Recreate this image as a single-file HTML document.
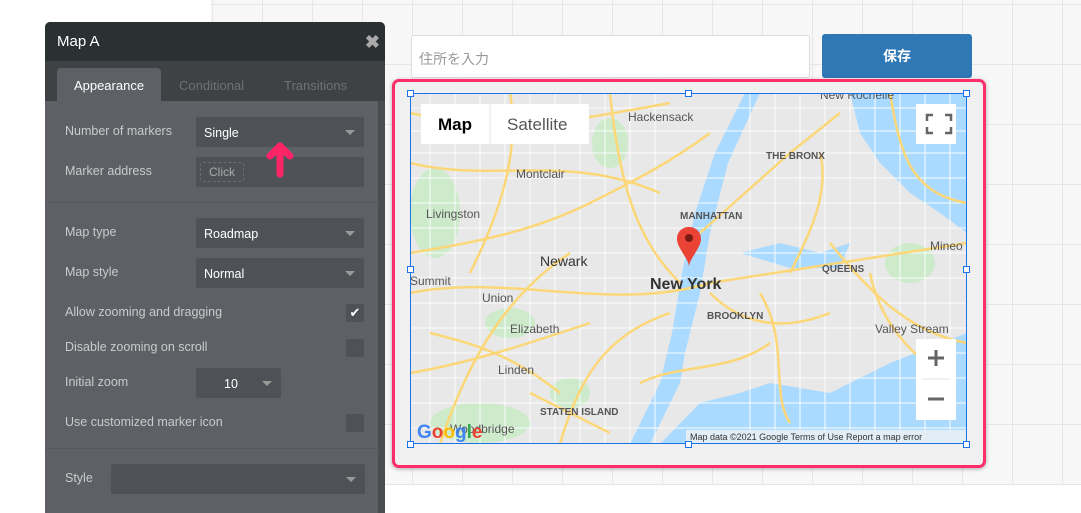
<!DOCTYPE html>
<html><head><meta charset="utf-8"><style>
*{margin:0;padding:0;box-sizing:border-box}
body{width:1081px;height:513px;overflow:hidden;position:relative;background:#fff;font-family:"Liberation Sans","Noto Sans CJK JP",sans-serif}
.grid{position:absolute;left:211px;top:0;width:870px;height:485px;background-color:#f7f7f7;
background-image:linear-gradient(90deg,#e6e6e6 1px,transparent 1px),linear-gradient(#e6e6e6 1px,transparent 1px);background-size:50px 50px,50px 60px;background-position:1px 0,0 4px}
.panel{position:absolute;left:45px;top:22px;width:340px;height:491px;background:#5d6165;border-radius:5px 5px 0 0;overflow:hidden}
.hd{height:39px;background:#2b3033;color:#fff;font-size:15px;padding:11px 12px}
.x{position:absolute;right:5px;top:10px;color:#aaa;font-size:18px;font-weight:bold}
.tabs{height:40px;background:#3e4245;position:relative}
.tab{position:absolute;top:7px;height:33px;font-size:13px;padding-top:10px;color:#6e7275}
.tab.a{left:12px;width:104px;background:#5d6165;color:#fff;border-radius:4px 4px 0 0;text-align:center}
.sb{position:absolute;right:0;top:79px;width:7px;bottom:0;background:#494d50}
.lbl{position:absolute;left:20px;color:#c9cbcc;font-size:12.5px}
.dd{position:absolute;background:#4e5256;border-radius:2px;color:#fff;font-size:12.5px;padding:9px 8px;height:30px}
.dd.ar:after{content:"";position:absolute;right:9px;top:13px;border:5px solid transparent;border-top:5px solid #999}
.cb{position:absolute;left:301px;width:18px;height:18px;background:#4e5256;border-radius:2px}
.hr{position:absolute;left:0;right:7px;height:1px;background:#55595d}
.map{position:absolute;left:392px;top:79px;width:594px;height:389px;border:3px solid #ff2d6a;border-radius:7px;background:#f0f0f0;box-shadow:0 1px 4px rgba(0,0,0,.3)}
.h{position:absolute;width:7px;height:7px;border:1px solid #1a73e8;background:#fff}
</style></head><body>
<div class="grid"></div>
<div class="panel">
<div class="hd">Map A</div><div class="x">✖</div>
<div class="tabs"><div class="tab a">Appearance</div><div class="tab" style="left:134px">Conditional</div><div class="tab" style="left:239px">Transitions</div></div>
<div class="sb"></div>
<div class="lbl" style="top:102px">Number of markers</div>
<div class="dd ar" style="left:151px;top:95px;width:168px">Single</div>
<div class="lbl" style="top:142px">Marker address</div>
<div class="dd" style="left:151px;top:135px;width:168px;padding:0"><span style="position:absolute;left:4px;top:5px;border:1px dashed #6a6e72;border-radius:3px;color:#aaa;padding:2px 8px;font-size:12px">Click</span></div>
<div class="hr" style="top:180px"></div>
<div class="lbl" style="top:203px">Map type</div>
<div class="dd ar" style="left:151px;top:196px;width:168px">Roadmap</div>
<div class="lbl" style="top:243px">Map style</div>
<div class="dd ar" style="left:151px;top:236px;width:168px">Normal</div>
<div class="lbl" style="top:283px">Allow zooming and dragging</div>
<div class="cb" style="top:282px;color:#fff;font-size:13px;text-align:center;line-height:18px">✔</div>
<div class="lbl" style="top:318px">Disable zooming on scroll</div>
<div class="cb" style="top:317px"></div>
<div class="lbl" style="top:353px">Initial zoom</div>
<div class="dd ar" style="left:151px;top:346px;width:85px;padding-left:28px">10</div>
<div class="lbl" style="top:393px">Use customized marker icon</div>
<div class="cb" style="top:392px"></div>
<div class="hr" style="top:426px"></div>
<div class="lbl" style="top:449px">Style</div>
<div class="dd ar" style="left:66px;top:442px;width:254px"></div>
</div>
<svg style="position:absolute;left:262px;top:138px" width="36" height="44" viewBox="0 0 36 44"><path d="M18 36V8M8 18L18 8L28 18" stroke="#ff2466" stroke-width="7" fill="none" stroke-linecap="round" stroke-linejoin="round"/></svg>
<div style="position:absolute;left:411px;top:35px;width:399px;height:43px;border:1px solid #ddd;border-radius:3px;background:#fff;color:#999;font-size:14px;padding:13px 7px">住所を入力</div>
<div style="position:absolute;left:822px;top:34px;width:150px;height:44px;background:#3077b5;border-radius:3px;color:#fff;font-size:14px;font-weight:bold;text-align:center;line-height:44px">保存</div>
<div class="map"></div>
<svg style="position:absolute;left:410px;top:93px" width="557" height="351" viewBox="0 0 557 351">
<rect width="557" height="351" fill="#e8e8e8"/>
<g fill="#cdeacb"><ellipse cx="25" cy="120" rx="25" ry="45"/><ellipse cx="100" cy="230" rx="25" ry="15"/><ellipse cx="70" cy="330" rx="50" ry="20"/><ellipse cx="200" cy="50" rx="18" ry="25"/><ellipse cx="500" cy="170" rx="25" ry="20"/><ellipse cx="160" cy="300" rx="20" ry="15"/></g>
<g fill="#aadaff">
<path d="M335 0L350 0L318 70L300 140L290 200L275 260L270 290L240 351L220 351L250 290L262 240L272 180L285 120L305 60Z"/>
<path d="M440 0L557 0L557 140L530 120L500 100L470 70L450 40Z"/>
<path d="M330 160L370 150L410 160L440 150L430 175L380 175Z"/>
<path d="M360 290L420 300L480 270L557 240L557 351L250 351L290 310L330 300Z"/>
</g>
<g stroke="#fff" stroke-width="1" fill="none" opacity=".95">
<path d="M0 15H557M0 38H557M0 60H557M0 85H557M0 110H557M0 135H557M0 160H557M0 185H557M0 210H557M0 235H557M0 260H557M0 285H557M0 310H557M0 335H557"/>
<path d="M20 0V351M45 0V351M70 0V351M95 0V351M120 0V351M145 0V351M170 0V351M195 0V351M220 0V351M245 0V351M340 0V351M365 0V351M390 0V351M415 0V351M440 0V351M465 0V351M490 0V351M515 0V351M540 0V351"/>
</g>
<g stroke="#fcd778" stroke-width="2.5" fill="none">
<path d="M0 20C100 40 150 30 260 10M0 70C80 90 160 60 250 100M0 200C100 180 200 220 300 190L557 150M30 351C60 260 100 200 160 160M200 0C210 100 230 150 270 190M150 351C170 280 200 240 260 220M350 200C380 250 360 300 380 330M420 150C460 200 500 240 557 250M290 140L380 60L430 20M480 0C490 60 500 100 557 110M0 280C60 270 120 250 180 230M230 290C270 270 320 280 360 250M100 0C110 60 90 120 60 180M0 160C60 150 120 140 180 110M180 110C220 90 260 70 300 40M300 200C330 230 370 240 420 220M410 60C420 100 400 140 380 180M20 240C60 250 100 260 150 300M460 180C470 230 500 260 540 290M120 300L200 340"/>
</g>
<g font-family="Liberation Sans,sans-serif" fill="#555" font-size="12">
<text x="218" y="28">Hackensack</text><text x="106" y="85">Montclair</text><text x="16" y="125">Livingston</text>
<text x="130" y="173" font-size="14" fill="#333">Newark</text><text x="72" y="209">Union</text><text x="100" y="240">Elizabeth</text>
<text x="88" y="281">Linden</text><text x="40" y="340">Woodbridge</text><text x="240" y="196" font-size="16" font-weight="bold" fill="#333">New York</text>
<text x="270" y="126" font-size="10" font-weight="bold">MANHATTAN</text><text x="356" y="66" font-size="10" font-weight="bold">THE BRONX</text>
<text x="297" y="226" font-size="10" font-weight="bold">BROOKLYN</text><text x="412" y="179" font-size="10" font-weight="bold">QUEENS</text>
<text x="130" y="322" font-size="10" font-weight="bold">STATEN ISLAND</text><text x="465" y="240">Valley Stream</text>
<text x="520" y="157">Mineo</text><text x="0" y="192">Summit</text><text x="410" y="6">New Rochelle</text>
</g>
<path d="M279 134c-7 0-12 5-12 12c0 9 12 20 12 28c0-8 12-19 12-28c0-7-5-12-12-12z" fill="#ea4335"/><circle cx="279" cy="145" r="4" fill="#7a1b14"/>
<rect x="11" y="11" width="168" height="40" fill="#fff"/><line x1="80" y1="11" x2="80" y2="51" stroke="#e5e5e5"/>
<text x="28" y="37" font-family="Liberation Sans,sans-serif" font-size="17" font-weight="bold" fill="#000">Map</text>
<text x="97" y="37" font-family="Liberation Sans,sans-serif" font-size="17" fill="#555">Satellite</text>
<rect x="506" y="11" width="40" height="40" fill="#fff"/><path d="M517 28v-6h6M535 22h6v6M541 34v6h-6M523 40h-6v-6" stroke="#666" stroke-width="2.5" fill="none"/>
<rect x="506" y="246" width="40" height="81" fill="#fff"/><line x1="512" y1="286" x2="540" y2="286" stroke="#e5e5e5"/>
<path d="M526 257v16M518 265h16M518 306h16" stroke="#666" stroke-width="3"/>
<rect x="276" y="337" width="281" height="14" fill="#e8eef4" opacity=".9"/>
<text x="280" y="347" font-family="Liberation Sans,sans-serif" font-size="9" fill="#333">Map data ©2021 Google   Terms of Use   Report a map error</text>
<text x="7" y="345" font-family="Liberation Sans,sans-serif" font-size="19" font-weight="bold"><tspan fill="#4285f4">G</tspan><tspan fill="#ea4335">o</tspan><tspan fill="#fbbc05">o</tspan><tspan fill="#4285f4">g</tspan><tspan fill="#34a853">l</tspan><tspan fill="#ea4335">e</tspan></text>
<rect x=".5" y=".5" width="556" height="350" fill="none" stroke="#1a73e8"/>
</svg>
<div class="h" style="left:407px;top:90px"></div><div class="h" style="left:685px;top:90px"></div><div class="h" style="left:963px;top:90px"></div>
<div class="h" style="left:407px;top:266px"></div><div class="h" style="left:963px;top:266px"></div>
<div class="h" style="left:407px;top:441px"></div><div class="h" style="left:685px;top:441px"></div><div class="h" style="left:963px;top:441px"></div>
</body></html>
